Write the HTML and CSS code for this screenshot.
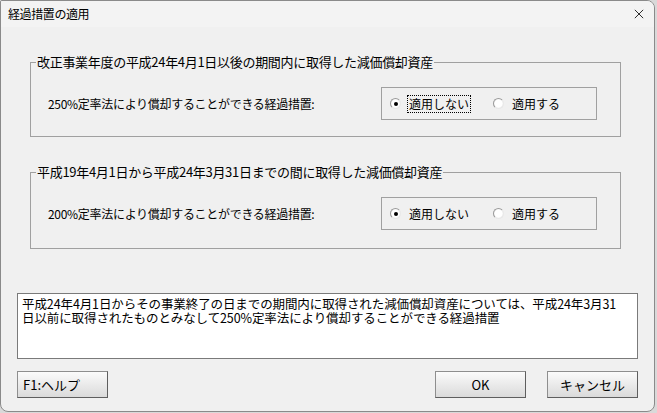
FILE: index.html
```html
<!DOCTYPE html>
<html lang="ja">
<head>
    <meta charset="UTF-8">
    <title>経過措置の適用</title>
    <link rel="stylesheet" href="styles.css">
</head>
<body>
    <div class="window">
        <div class="titlebar">
            <span class="title">経過措置の適用</span>
            <svg class="close" viewBox="0 0 12 12" xmlns="http://www.w3.org/2000/svg">
                <path d="M1 1 L11 11 M11 1 L1 11" stroke="#1a1a1a" stroke-width="1.1" fill="none"/>
            </svg>
        </div>

        <div class="content">
            <fieldset class="group">
                <legend>改正事業年度の平成24年4月1日以後の期間内に取得した減価償却資産</legend>
                <div class="row">
                    <span class="label">250%定率法により償却することができる経過措置:</span>
                    <div class="choice">
                        <label class="radio checked"><span class="dot"></span><span class="text focus">適用しない</span></label>
                        <label class="radio"><span class="dot"></span><span class="text">適用する</span></label>
                    </div>
                </div>
            </fieldset>

            <fieldset class="group second">
                <legend>平成19年4月1日から平成24年3月31日までの間に取得した減価償却資産</legend>
                <div class="row">
                    <span class="label">200%定率法により償却することができる経過措置:</span>
                    <div class="choice">
                        <label class="radio checked"><span class="dot"></span><span class="text">適用しない</span></label>
                        <label class="radio"><span class="dot"></span><span class="text">適用する</span></label>
                    </div>
                </div>
            </fieldset>

            <div class="note">平成24年4月1日からその事業終了の日までの期間内に取得された減価償却資産については、平成24年3月31<br>日以前に取得されたものとみなして250%定率法により償却することができる経過措置</div>

            <div class="buttons">
                <button class="btn help">F1:ヘルプ</button>
                <div class="actions">
                    <button class="btn">OK</button>
                    <button class="btn">キャンセル</button>
                </div>
            </div>
        </div>
    </div>
</body>
</html>
```

FILE: styles.css
```css
body {
    margin: 0;
    padding: 0;
    background-color: #d9d9d9;
    font-family: "Noto Sans CJK JP", "Noto Sans", sans-serif;
    font-size: 13px;
    color: #000;
}

.window {
    box-sizing: border-box;
    width: 655px;
    height: 412px;
    background-color: #f0f0f0;
    border: 1px solid #8a8a8a;
    border-radius: 2px 8px 8px 8px;
    overflow: hidden;
}

.titlebar {
    height: 26px;
    background-color: #f3f3f3;
    display: flex;
    justify-content: space-between;
    align-items: center;
    padding: 0 10px 0 7px;
}

.title {
    font-size: 12px;
    letter-spacing: -0.4px;
    line-height: 16px;
}

.close {
    width: 10px;
    height: 10px;
}

.content {
    padding: 0 16px;
}

.group {
    margin: 27px 17px 0 13px;
    padding: 0 23px 16px 0;
    border: 1px solid #a0a0a0;
    min-width: 0;
}

.group.second {
    margin-top: 27px;
    padding-bottom: 18px;
}

.group legend {
    margin-left: 5px;
    padding: 0 1px;
    line-height: 16px;
    letter-spacing: -0.3px;
}

.row {
    display: flex;
    align-items: center;
    padding-top: 17px;
}

.label {
    padding-left: 17px;
    line-height: 16px;
    font-size: 12px;
    letter-spacing: -0.3px;
}

.choice {
    margin-left: auto;
    box-sizing: border-box;
    width: 216px;
    height: 33px;
    border: 1px solid #a0a0a0;
    display: flex;
    align-items: center;
    padding-left: 8px;
}

.radio {
    display: flex;
    align-items: center;
    gap: 6px;
    line-height: 16px;
    font-size: 12px;
}

.radio:first-child {
    width: 103px;
}

.dot {
    box-sizing: border-box;
    width: 11px;
    height: 11px;
    border-radius: 50%;
    border: 1px solid #9a9a9a;
    border-right-color: #e8e8e8;
    border-bottom-color: #e8e8e8;
    background: radial-gradient(circle, #fff 55%, #dcdcdc 100%);
    display: flex;
    align-items: center;
    justify-content: center;
}

.radio.checked .dot::after {
    content: "";
    width: 4px;
    height: 4px;
    border-radius: 50%;
    background-color: #000;
}

.text {
    padding: 0 1px;
    border: 1px solid transparent;
}

.text.focus {
    border: 1px dotted #000;
}

.note {
    margin-top: 44px;
    box-sizing: border-box;
    height: 66px;
    background-color: #fff;
    border: 1px solid #7a7a7a;
    padding: 3px 4px;
    line-height: 14px;
    font-size: 12.5px;
    letter-spacing: -0.1px;
}

.buttons {
    margin-top: 12px;
    display: flex;
    justify-content: space-between;
}

.actions {
    display: flex;
    gap: 21px;
}

.btn {
    box-sizing: border-box;
    width: 91px;
    height: 27px;
    font-family: inherit;
    font-size: 13px;
    color: #000;
    border: 1px solid #8e8e8e;
    border-right-color: #5e5e5e;
    border-bottom-color: #5e5e5e;
    background: linear-gradient(#fbfbfb, #dadada);
    padding: 0;
    text-align: center;
}

.btn.help {
    text-align: left;
    padding-left: 5px;
}
```
